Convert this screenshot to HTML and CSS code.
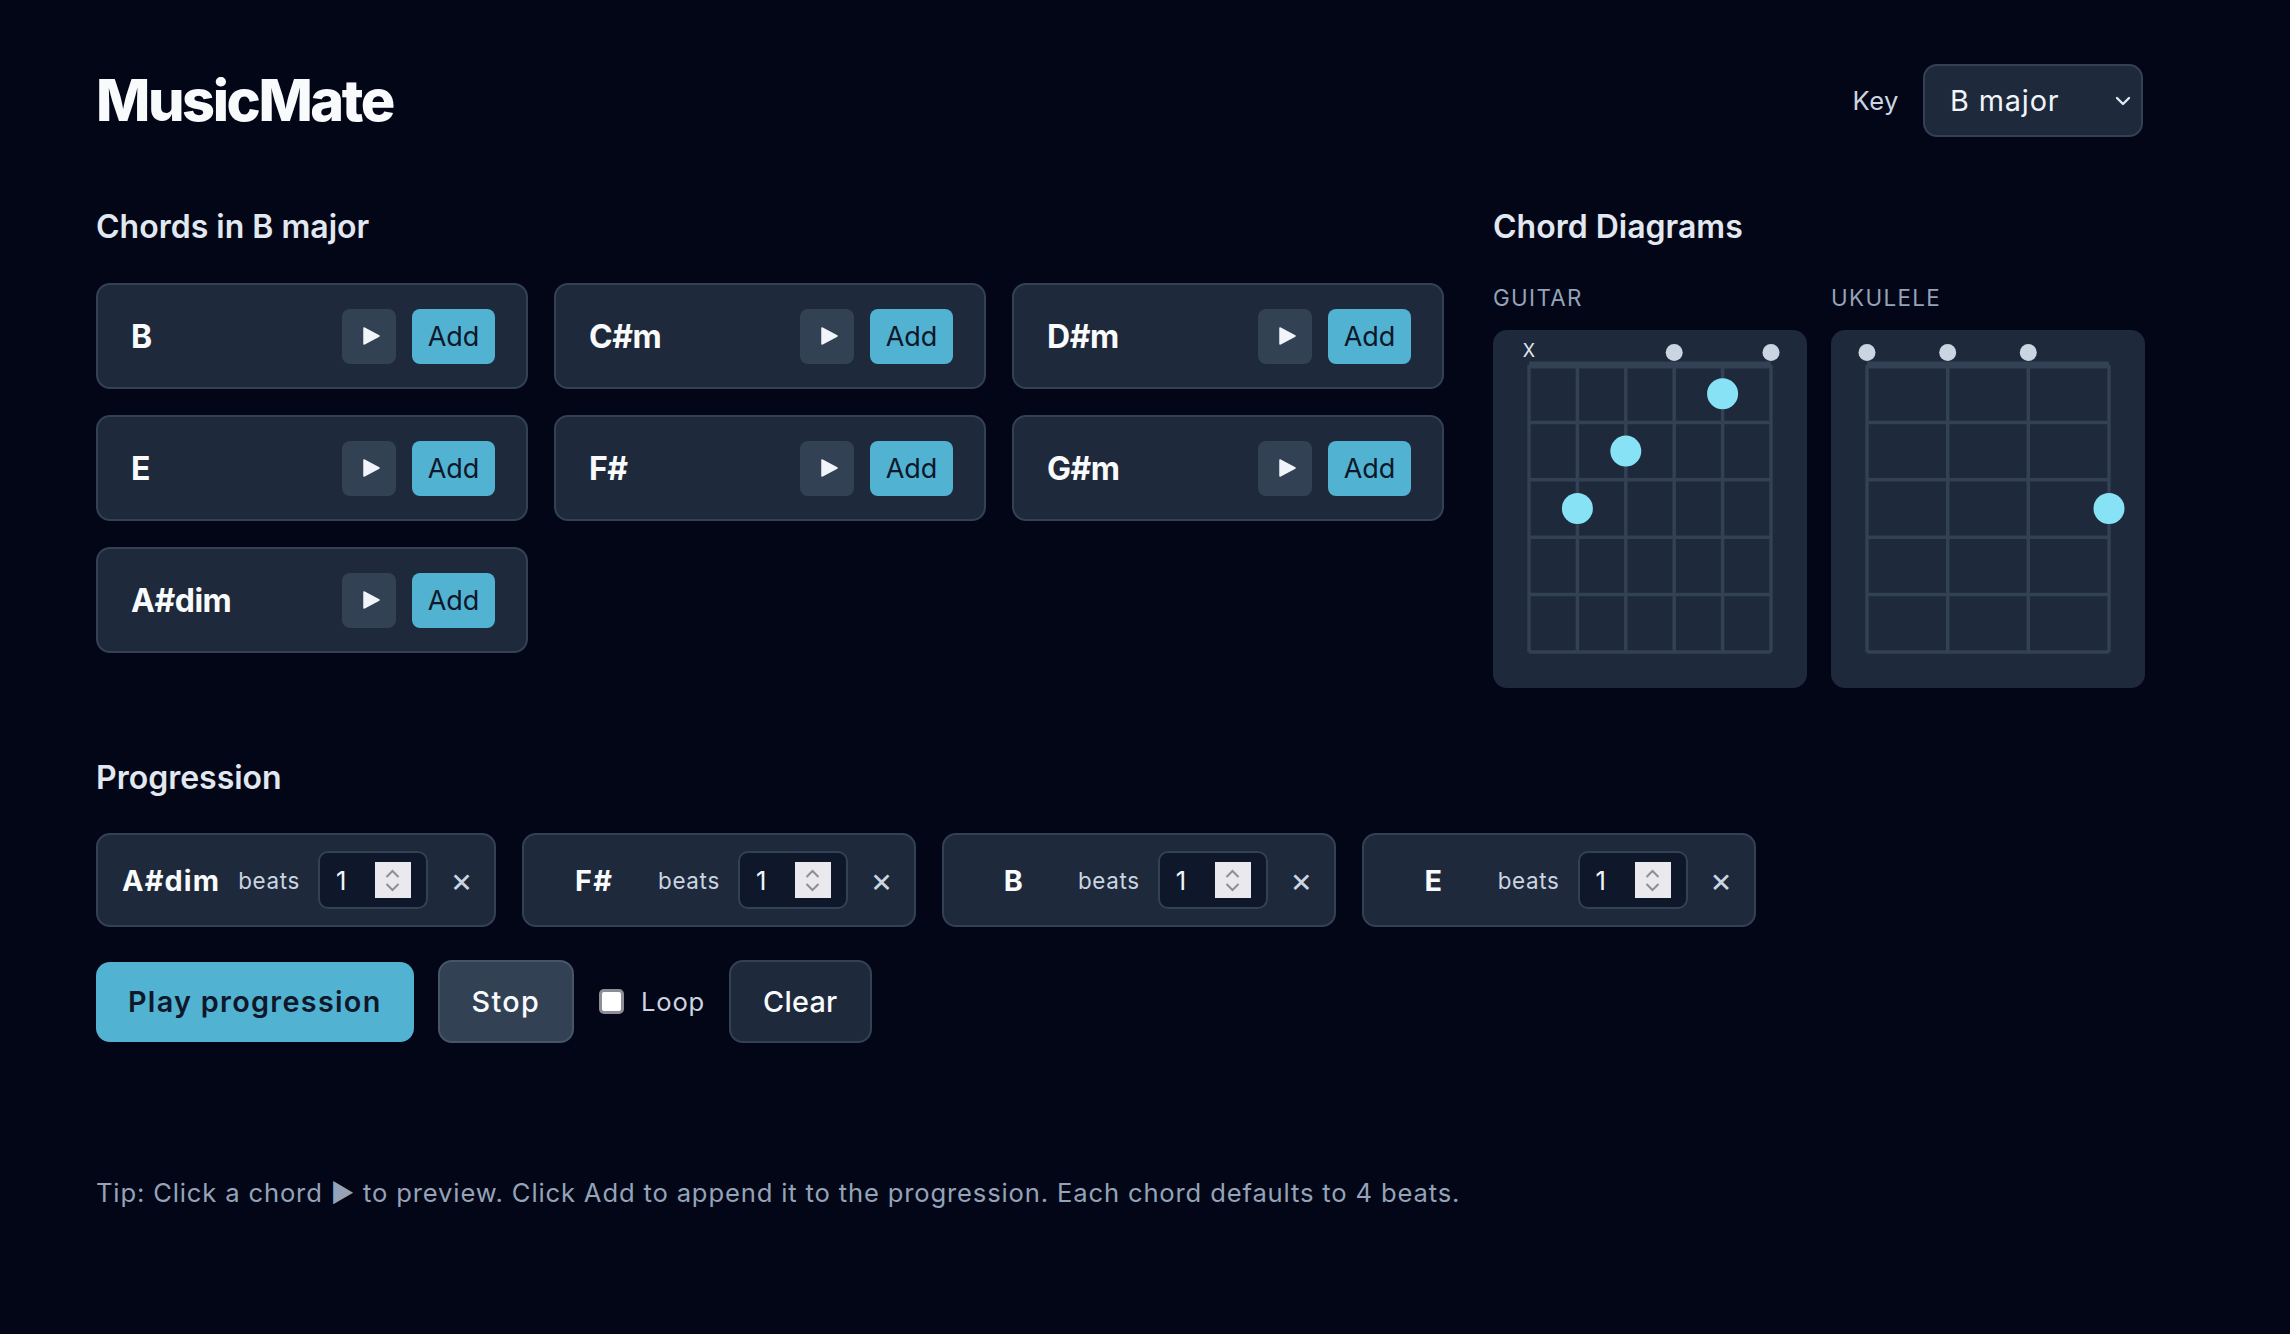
FILE: index.html
```html
<!DOCTYPE html>
<html lang="en">
<head>
<meta charset="utf-8">
<title>MusicMate</title>
<link rel="stylesheet" href="styles.css">
</head>
<body>
<div class="app">
  <header class="topbar">
    <h1 class="brand">MusicMate</h1>
    <div class="key">
      <span class="key-label">Key</span>
      <div class="select">
        <span>B major</span>
        <svg class="chev" width="16" height="10" viewBox="0 0 16 10"><polyline points="2,2 8,8 14,2" fill="none" stroke="#e2e8f0" stroke-width="2.4" stroke-linecap="round" stroke-linejoin="round"/></svg>
      </div>
    </div>
  </header>

  <section class="top-grid">
    <div class="chords">
      <h2 class="section-title">Chords in B major</h2>
      <div class="chord-grid">
        <div class="chord-card"><span class="chord-name">B</span><div class="chord-actions"><button class="play"><svg width="18" height="18" viewBox="0 0 18 18"><polygon points="2,1 17,9 2,17" fill="#f1f5f9" stroke="#f1f5f9" stroke-width="1.5" stroke-linejoin="round"/></svg></button><button class="add">Add</button></div></div>
        <div class="chord-card"><span class="chord-name">C#m</span><div class="chord-actions"><button class="play"><svg width="18" height="18" viewBox="0 0 18 18"><polygon points="2,1 17,9 2,17" fill="#f1f5f9" stroke="#f1f5f9" stroke-width="1.5" stroke-linejoin="round"/></svg></button><button class="add">Add</button></div></div>
        <div class="chord-card"><span class="chord-name">D#m</span><div class="chord-actions"><button class="play"><svg width="18" height="18" viewBox="0 0 18 18"><polygon points="2,1 17,9 2,17" fill="#f1f5f9" stroke="#f1f5f9" stroke-width="1.5" stroke-linejoin="round"/></svg></button><button class="add">Add</button></div></div>
        <div class="chord-card"><span class="chord-name">E</span><div class="chord-actions"><button class="play"><svg width="18" height="18" viewBox="0 0 18 18"><polygon points="2,1 17,9 2,17" fill="#f1f5f9" stroke="#f1f5f9" stroke-width="1.5" stroke-linejoin="round"/></svg></button><button class="add">Add</button></div></div>
        <div class="chord-card"><span class="chord-name">F#</span><div class="chord-actions"><button class="play"><svg width="18" height="18" viewBox="0 0 18 18"><polygon points="2,1 17,9 2,17" fill="#f1f5f9" stroke="#f1f5f9" stroke-width="1.5" stroke-linejoin="round"/></svg></button><button class="add">Add</button></div></div>
        <div class="chord-card"><span class="chord-name">G#m</span><div class="chord-actions"><button class="play"><svg width="18" height="18" viewBox="0 0 18 18"><polygon points="2,1 17,9 2,17" fill="#f1f5f9" stroke="#f1f5f9" stroke-width="1.5" stroke-linejoin="round"/></svg></button><button class="add">Add</button></div></div>
        <div class="chord-card"><span class="chord-name">A#dim</span><div class="chord-actions"><button class="play"><svg width="18" height="18" viewBox="0 0 18 18"><polygon points="2,1 17,9 2,17" fill="#f1f5f9" stroke="#f1f5f9" stroke-width="1.5" stroke-linejoin="round"/></svg></button><button class="add">Add</button></div></div>
      </div>
    </div>

    <div class="diagrams">
      <h2 class="section-title">Chord Diagrams</h2>
      <div class="diagram-row">
        <div class="diagram">
          <div class="instrument">GUITAR</div>
          <div class="fretboard">
            <svg width="314" height="358" viewBox="0 0 314 358">
              <g stroke="#334155" stroke-width="3.5">
                <line x1="36" y1="35" x2="36" y2="322"/>
                <line x1="84.4" y1="35" x2="84.4" y2="322"/>
                <line x1="132.8" y1="35" x2="132.8" y2="322"/>
                <line x1="181.2" y1="35" x2="181.2" y2="322"/>
                <line x1="229.6" y1="35" x2="229.6" y2="322"/>
                <line x1="278" y1="35" x2="278" y2="322"/>
                <line x1="36" y1="92.4" x2="278" y2="92.4"/>
                <line x1="36" y1="149.8" x2="278" y2="149.8"/>
                <line x1="36" y1="207.2" x2="278" y2="207.2"/>
                <line x1="36" y1="264.6" x2="278" y2="264.6"/>
                <line x1="36" y1="322" x2="278" y2="322"/>
                <line x1="36" y1="35" x2="278" y2="35" stroke-width="7"/>
              </g>
              <text x="36" y="27" class="mute">X</text>
              <circle cx="181.2" cy="22.5" r="8.5" fill="#cbd5e1"/>
              <circle cx="278" cy="22.5" r="8.5" fill="#cbd5e1"/>
              <circle cx="229.6" cy="63.7" r="15.5" fill="#88e2f6"/>
              <circle cx="132.8" cy="121.1" r="15.5" fill="#88e2f6"/>
              <circle cx="84.4" cy="178.5" r="15.5" fill="#88e2f6"/>
            </svg>
          </div>
        </div>
        <div class="diagram">
          <div class="instrument">UKULELE</div>
          <div class="fretboard">
            <svg width="314" height="358" viewBox="0 0 314 358">
              <g stroke="#334155" stroke-width="3.5">
                <line x1="36" y1="35" x2="36" y2="322"/>
                <line x1="116.7" y1="35" x2="116.7" y2="322"/>
                <line x1="197.3" y1="35" x2="197.3" y2="322"/>
                <line x1="278" y1="35" x2="278" y2="322"/>
                <line x1="36" y1="92.4" x2="278" y2="92.4"/>
                <line x1="36" y1="149.8" x2="278" y2="149.8"/>
                <line x1="36" y1="207.2" x2="278" y2="207.2"/>
                <line x1="36" y1="264.6" x2="278" y2="264.6"/>
                <line x1="36" y1="322" x2="278" y2="322"/>
                <line x1="36" y1="35" x2="278" y2="35" stroke-width="7"/>
              </g>
              <circle cx="36" cy="22.5" r="8.5" fill="#cbd5e1"/>
              <circle cx="116.7" cy="22.5" r="8.5" fill="#cbd5e1"/>
              <circle cx="197.3" cy="22.5" r="8.5" fill="#cbd5e1"/>
              <circle cx="278" cy="178.5" r="15.5" fill="#88e2f6"/>
            </svg>
          </div>
        </div>
      </div>
    </div>
  </section>

  <section class="progression">
    <h2 class="section-title">Progression</h2>
    <div class="prog-list">
      <div class="prog-item"><span class="prog-name">A#dim</span><span class="beats">beats</span><div class="numbox"><span class="num">1</span><span class="spin"><svg width="36" height="36" viewBox="0 0 36 36"><polyline points="11.5,15 17.5,9 23.5,15" fill="none" stroke="#8e8e93" stroke-width="2"/><polyline points="11.5,22 17.5,28 23.5,22" fill="none" stroke="#8e8e93" stroke-width="2"/></svg></span></div><button class="remove">×</button></div>
      <div class="prog-item"><span class="prog-name">F#</span><span class="beats">beats</span><div class="numbox"><span class="num">1</span><span class="spin"><svg width="36" height="36" viewBox="0 0 36 36"><polyline points="11.5,15 17.5,9 23.5,15" fill="none" stroke="#8e8e93" stroke-width="2"/><polyline points="11.5,22 17.5,28 23.5,22" fill="none" stroke="#8e8e93" stroke-width="2"/></svg></span></div><button class="remove">×</button></div>
      <div class="prog-item"><span class="prog-name">B</span><span class="beats">beats</span><div class="numbox"><span class="num">1</span><span class="spin"><svg width="36" height="36" viewBox="0 0 36 36"><polyline points="11.5,15 17.5,9 23.5,15" fill="none" stroke="#8e8e93" stroke-width="2"/><polyline points="11.5,22 17.5,28 23.5,22" fill="none" stroke="#8e8e93" stroke-width="2"/></svg></span></div><button class="remove">×</button></div>
      <div class="prog-item"><span class="prog-name">E</span><span class="beats">beats</span><div class="numbox"><span class="num">1</span><span class="spin"><svg width="36" height="36" viewBox="0 0 36 36"><polyline points="11.5,15 17.5,9 23.5,15" fill="none" stroke="#8e8e93" stroke-width="2"/><polyline points="11.5,22 17.5,28 23.5,22" fill="none" stroke="#8e8e93" stroke-width="2"/></svg></span></div><button class="remove">×</button></div>
    </div>
    <div class="controls">
      <button class="btn btn-primary">Play progression</button>
      <button class="btn btn-stop">Stop</button>
      <label class="loop"><span class="checkbox"></span><span>Loop</span></label>
      <button class="btn btn-clear">Clear</button>
    </div>
  </section>

  <p class="tip">Tip: Click a chord ▶ to preview. Click Add to append it to the progression. Each chord defaults to 4 beats.</p>
</div>
</body>
</html>
```

FILE: styles.css
```css
* { box-sizing: border-box; }

html, body {
  margin: 0;
  background: #020617;
}

body {
  font-family: Inter, "Noto Sans", "Liberation Sans", sans-serif;
  color: #f1f5f9;
  min-height: 1334px;
}

button {
  font-family: inherit;
  cursor: pointer;
}

.app {
  width: 2143px;
  padding: 64px 0 0 96px;
}

/* header */
.topbar {
  display: flex;
  justify-content: space-between;
  align-items: center;
  height: 73px;
}

.brand {
  margin: 0;
  font-size: 57.6px;
  font-weight: 800;
  letter-spacing: -0.042em;
  line-height: 1;
  color: #f8fafc;
}

.key {
  display: flex;
  align-items: center;
  gap: 24px;
}

.key-label {
  font-size: 25.6px;
  letter-spacing: 0.02em;
  color: #cbd5e1;
}

.select {
  width: 220px;
  height: 73px;
  display: flex;
  align-items: center;
  justify-content: space-between;
  padding: 0 10px 0 25px;
  background: #1e293b;
  border: 2px solid #334155;
  border-radius: 14px;
  font-size: 28.8px;
  letter-spacing: 0.03em;
  color: #f1f5f9;
}

/* top grid */
.top-grid {
  display: grid;
  grid-template-columns: 1fr 650px;
  column-gap: 49px;
  margin-top: 69.5px;
}

.section-title {
  margin: 0 0 36.5px;
  font-size: 32px;
  line-height: 40px;
  font-weight: 600;
  color: #e2e8f0;
}

.chord-grid {
  display: grid;
  grid-template-columns: repeat(3, 1fr);
  column-gap: 26px;
  row-gap: 26px;
}

.chord-card {
  height: 106px;
  display: flex;
  align-items: center;
  justify-content: space-between;
  padding: 0 31px 0 33px;
  background: #1e293b;
  border: 2px solid #334155;
  border-radius: 14px;
}

.chord-name {
  font-size: 32px;
  font-weight: 700;
  letter-spacing: -0.015em;
  color: #f8fafc;
}

.chord-actions {
  display: flex;
  gap: 16px;
}

.play {
  width: 54px;
  height: 55px;
  border: none;
  border-radius: 8px;
  background: #334155;
  display: flex;
  align-items: center;
  justify-content: center;
  padding: 0 0 0 4px;
}

.add {
  width: 83px;
  height: 55px;
  border: none;
  border-radius: 8px;
  background: #51b3d1;
  color: #0f172a;
  font-size: 27px;
  padding: 0;
}

/* diagrams */
.diagram-row {
  display: grid;
  grid-template-columns: 314px 1fr;
  column-gap: 24px;
}

.instrument {
  font-size: 22.4px;
  line-height: 30px;
  letter-spacing: 0.06em;
  color: #94a3b8;
  margin-bottom: 17px;
}

.fretboard {
  height: 358px;
  background: #1e293b;
  border-radius: 14px;
  overflow: hidden;
}

.fretboard svg { display: block; }

.mute {
  font-family: Inter, "Liberation Sans", sans-serif;
  font-size: 18px;
  fill: #e2e8f0;
  text-anchor: middle;
}

/* progression */
.progression {
  margin-top: 69.5px;
}

.progression .section-title {
  margin-bottom: 35.5px;
}

.prog-list {
  display: flex;
  gap: 26px;
}

.prog-item {
  height: 94px;
  display: flex;
  align-items: center;
  padding: 0 23px 0 24px;
  background: #1e293b;
  border: 2px solid #334155;
  border-radius: 14px;
}

.prog-name {
  min-width: 92px;
  text-align: center;
  font-size: 28.8px;
  font-weight: 700;
  letter-spacing: 0.04em;
  color: #f8fafc;
  margin-right: 18px;
}

.beats {
  font-size: 22.4px;
  letter-spacing: 0.03em;
  color: #cbd5e1;
  margin-right: 18px;
}

.numbox {
  width: 110px;
  height: 58px;
  display: flex;
  align-items: center;
  justify-content: space-between;
  padding: 0 15px 0 16px;
  background: #0f172a;
  border: 2px solid #334155;
  border-radius: 10px;
  margin-right: 24px;
}

.num {
  font-size: 25.6px;
  color: #f1f5f9;
}

.spin {
  width: 36px;
  height: 36px;
  background: #e9e9ee;
}

.spin svg { display: block; }

.remove {
  border: none;
  background: none;
  padding: 0;
  width: 19px;
  font-size: 34px;
  line-height: 1;
  color: #cbd5e1;
  display: flex;
  justify-content: center;
}

.controls {
  display: flex;
  align-items: center;
  gap: 24px;
  margin-top: 33px;
}

.btn {
  height: 83px;
  padding: 0 32px;
  border-radius: 14px;
  font-size: 28.8px;
  letter-spacing: 0.045em;
}

.btn-primary {
  height: 80px;
  border: none;
  background: #51b3d1;
  color: #0f172a;
  font-weight: 600;
}

.btn-stop {
  border: 2px solid #475569;
  background: #334155;
  color: #f8fafc;
  font-weight: 500;
}

.btn-clear {
  border: 2px solid #334155;
  background: #1e293b;
  color: #f8fafc;
  font-weight: 500;
  letter-spacing: 0.01em;
}

.loop {
  display: flex;
  align-items: center;
  gap: 17px;
  padding-left: 1px;
  font-size: 25.6px;
  letter-spacing: 0.03em;
  color: #cbd5e1;
}

.checkbox {
  width: 25px;
  height: 25px;
  background: #ffffff;
  border: 3px solid #8d8d96;
  border-radius: 5px;
}

.tip {
  margin: 132px 0 0;
  font-size: 25.6px;
  line-height: 36px;
  letter-spacing: 0.033em;
  color: #94a3b8;
}
```
